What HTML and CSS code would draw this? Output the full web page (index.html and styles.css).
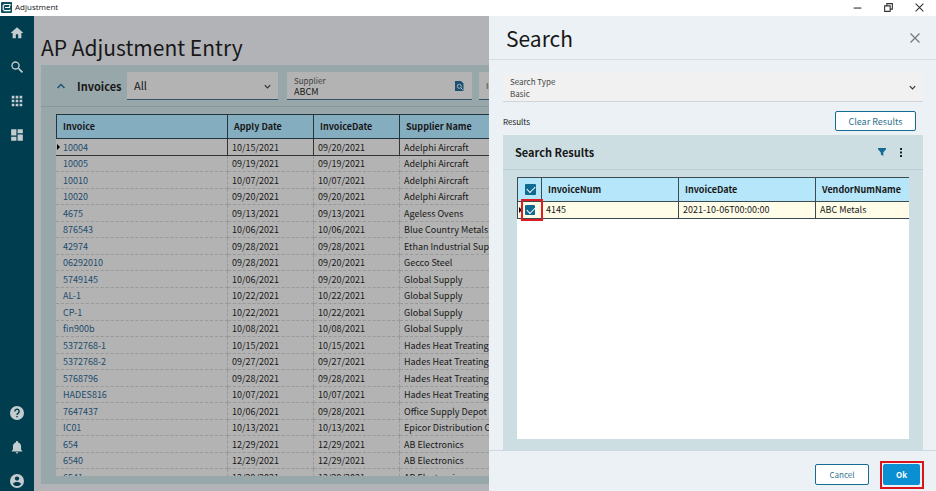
FILE: index.html
```html
<!DOCTYPE html>
<html lang="en">
<head>
<meta charset="utf-8">
<title>Adjustment</title>
<link rel="stylesheet" href="styles.css">
</head>
<body>
<header class="titlebar">
  <svg class="app-logo" viewBox="0 0 11 11"><rect width="11" height="11" rx="1" fill="#0a4f60"/><path d="M9 4V2.500H3.500L2.200 3.600v4L3.500 8.600H9V7.400M4 5.500h4.500V4" fill="none" stroke="#fff" stroke-width="1.100"/></svg>
  <span class="app-name">Adjustment</span>
  <div class="window-controls">
    <button type="button" aria-label="Minimize"><svg viewBox="0 0 10 10"><path d="M1.500 5.500h7"/></svg></button>
    <button type="button" aria-label="Restore"><svg viewBox="0 0 10 10"><path d="M1.500 3.500h5v5h-5zM3.500 3.500v-2h5v5h-2"/></svg></button>
    <button type="button" aria-label="Close"><svg viewBox="0 0 10 10"><path d="M1.500 1.500l7 7M8.500 1.500l-7 7"/></svg></button>
  </div>
</header>
<div class="workspace">
  <nav class="sidebar" aria-label="Main">
    <a href="#" aria-label="Home"><svg viewBox="0 0 24 24"><path d="M10 21v-7h4v7h5.500v-9H23L12 2 1 12h3.500v9z"/></svg></a>
    <a href="#" aria-label="Search"><svg viewBox="0 0 24 24"><path d="M16.300 14.300h-.9l-.3-.3a7.200 7.200 0 1 0-1 1l.3.300v.9l6 6 1.900-1.900zm-6.800 0a4.900 4.900 0 1 1 0-9.800 4.900 4.900 0 0 1 0 9.800z"/></svg></a>
    <a href="#" aria-label="Menu"><svg viewBox="0 0 24 24"><path d="M3 3h4.500v4.500H3zM9.750 3h4.500v4.500h-4.500zM16.500 3H21v4.500h-4.500zM3 9.750h4.500v4.500H3zM9.750 9.750h4.500v4.500h-4.500zM16.500 9.750H21v4.500h-4.500zM3 16.500h4.500V21H3zM9.750 16.500h4.500V21h-4.500zM16.500 16.500H21V21h-4.500z"/></svg></a>
    <a href="#" aria-label="Dashboard"><svg viewBox="0 0 24 24"><path d="M2 2h9v11H2zM2 15h9v7H2zM13 2h9v7h-9zM13 11h9v11h-9z"/></svg></a>
    <a href="#" class="push" aria-label="Help"><svg viewBox="0 0 24 24"><circle cx="12" cy="12" r="12"/><path class="cut" d="M8.300 9.300a3.700 3.700 0 1 1 5.800 3c-1.300.9-2 1.500-2 3M12 17v2.200"/></svg></a>
    <a href="#" aria-label="Notifications"><svg viewBox="0 0 24 24"><path d="M12 23a2.200 2.200 0 0 0 2.200-2.200H9.800A2.200 2.200 0 0 0 12 23zm7-6.500V11c0-3.300-1.800-6-5-6.800V3.500a2 2 0 0 0-4 0v.7C6.800 5 5 7.700 5 11v5.500l-2 2v1h18v-1z"/></svg></a>
    <a href="#" aria-label="Account"><svg viewBox="0 0 24 24"><circle cx="12" cy="12" r="12"/><circle class="hole" cx="12" cy="7.800" r="3.700"/><path class="hole" d="M4.800 17c1.500-2.300 4.600-3.400 7.200-3.400s5.700 1.100 7.200 3.400c-1.600 2.200-4.200 3.500-7.200 3.500S6.400 19.200 4.800 17z"/></svg></a>
  </nav>
  <main class="page">
    <h1>AP Adjustment Entry</h1>
    <section class="panel">
      <div class="panel-head">
        <button type="button" class="collapse" aria-label="Collapse"><svg viewBox="0 0 10 10"><path d="M1.500 7L5 3.500 8.500 7"/></svg></button>
        <h2>Invoices</h2>
        <div class="field view">
          <select aria-label="View"><option>All</option></select>
          <svg class="chevron" viewBox="0 0 10 10"><path d="M2 3.500l3 3 3-3"/></svg>
        </div>
        <div class="field supplier">
          <label for="supplier">Supplier</label>
          <input id="supplier" type="text" value="ABCM">
          <button type="button" class="lookup" aria-label="Find supplier"><svg viewBox="0 0 10 10"><path d="M1 0H7l2.500 2.500V10H1z" fill="#1a5274"/><circle cx="5.300" cy="5.300" r="2" fill="none" stroke="#b3b3b3" stroke-width="1"/><path d="M6.800 6.800L9 9" stroke="#b3b3b3"/></svg></button>
        </div>
        <div class="field next"><label for="next">Invoice</label><input id="next" type="text"></div>
      </div>
      <div class="grid">
        <table>
          <colgroup><col class="c1"><col class="c2"><col class="c3"><col class="c4"></colgroup>
          <thead><tr><th>Invoice</th><th>Apply Date</th><th>InvoiceDate</th><th>Supplier Name</th></tr></thead>
          <tbody>
            <tr class="current"><td><a href="#">10004</a></td><td>10/15/2021</td><td>09/20/2021</td><td>Adelphi Aircraft</td></tr>
            <tr><td><a href="#">10005</a></td><td>09/19/2021</td><td>09/19/2021</td><td>Adelphi Aircraft</td></tr>
            <tr><td><a href="#">10010</a></td><td>10/07/2021</td><td>10/07/2021</td><td>Adelphi Aircraft</td></tr>
            <tr><td><a href="#">10020</a></td><td>09/20/2021</td><td>09/20/2021</td><td>Adelphi Aircraft</td></tr>
            <tr><td><a href="#">4675</a></td><td>09/13/2021</td><td>09/13/2021</td><td>Ageless Ovens</td></tr>
            <tr><td><a href="#">876543</a></td><td>10/06/2021</td><td>10/06/2021</td><td>Blue Country Metals C</td></tr>
            <tr><td><a href="#">42974</a></td><td>09/28/2021</td><td>09/28/2021</td><td>Ethan Industrial Supp</td></tr>
            <tr><td><a href="#">06292010</a></td><td>09/28/2021</td><td>09/20/2021</td><td>Gecco Steel</td></tr>
            <tr><td><a href="#">5749145</a></td><td>10/06/2021</td><td>09/20/2021</td><td>Global Supply</td></tr>
            <tr><td><a href="#">AL-1</a></td><td>10/22/2021</td><td>10/22/2021</td><td>Global Supply</td></tr>
            <tr><td><a href="#">CP-1</a></td><td>10/22/2021</td><td>10/22/2021</td><td>Global Supply</td></tr>
            <tr><td><a href="#">fin900b</a></td><td>10/08/2021</td><td>10/08/2021</td><td>Global Supply</td></tr>
            <tr><td><a href="#">5372768-1</a></td><td>10/15/2021</td><td>10/15/2021</td><td>Hades Heat Treating</td></tr>
            <tr><td><a href="#">5372768-2</a></td><td>09/27/2021</td><td>09/27/2021</td><td>Hades Heat Treating</td></tr>
            <tr><td><a href="#">5768796</a></td><td>09/28/2021</td><td>09/28/2021</td><td>Hades Heat Treating</td></tr>
            <tr><td><a href="#">HADES816</a></td><td>10/07/2021</td><td>10/07/2021</td><td>Hades Heat Treating</td></tr>
            <tr><td><a href="#">7647437</a></td><td>10/06/2021</td><td>09/28/2021</td><td>Office Supply Depot</td></tr>
            <tr><td><a href="#">IC01</a></td><td>10/13/2021</td><td>10/13/2021</td><td>Epicor Distribution Co</td></tr>
            <tr><td><a href="#">654</a></td><td>12/29/2021</td><td>12/29/2021</td><td>AB Electronics</td></tr>
            <tr><td><a href="#">6540</a></td><td>12/29/2021</td><td>12/29/2021</td><td>AB Electronics</td></tr>
            <tr><td><a href="#">6541</a></td><td>12/29/2021</td><td>12/29/2021</td><td>AB Electronics</td></tr>
          </tbody>
        </table>
      </div>
    </section>
  </main>
  <aside class="drawer">
    <div class="drawer-head">
      <h1>Search</h1>
      <button type="button" aria-label="Close search"><svg viewBox="0 0 10 10"><path d="M.5.5l9 9M9.500.5l-9 9"/></svg></button>
    </div>
    <div class="drawer-body">
      <div class="search-type">
        <label for="type">Search Type</label>
        <select id="type"><option>Basic</option></select>
        <svg class="chevron" viewBox="0 0 10 10"><path d="M2 3.500l3 3 3-3"/></svg>
      </div>
      <div class="results-bar"><span>Results</span><button type="button" class="outline clear">Clear Results</button></div>
      <section class="results">
        <div class="results-head">
          <h2>Search Results</h2>
          <button type="button" aria-label="Filter"><svg viewBox="0 0 10 10"><path d="M1 1h8v1.200L6.300 5.500V9L3.800 7.500v-2L1 2.200z" fill="#146c93"/></svg></button>
          <button type="button" aria-label="More"><svg viewBox="0 0 10 10"><path d="M4 1h2v2H4zM4 4.500h2v2H4zM4 8h2v2H4z" fill="#222"/></svg></button>
        </div>
        <div class="results-grid">
          <table>
            <colgroup><col class="r1"><col class="r2"><col class="r3"><col class="r4"></colgroup>
            <thead><tr><th><input type="checkbox" checked aria-label="Select all"></th><th>InvoiceNum</th><th>InvoiceDate</th><th>VendorNumName</th></tr></thead>
            <tbody><tr class="current"><td><input type="checkbox" checked aria-label="Select 4145"></td><td>4145</td><td>2021-10-06T00:00:00</td><td>ABC Metals</td></tr></tbody>
          </table>
        </div>
      </section>
    </div>
    <footer class="actions">
      <button type="button" class="outline cancel">Cancel</button>
      <div class="marked"><button type="button" class="ok">Ok</button></div>
    </footer>
  </aside>
</div>
</body>
</html>
```
FILE: styles.css
```css
* { box-sizing: border-box; }
body {
  margin: 0;
  height: 100vh;
  display: flex;
  flex-direction: column;
  overflow: hidden;
  font-family: "Noto Sans CJK SC", "Noto Sans", sans-serif;
  font-size: 9px;
  color: #181818;
}
button, input, select { font: inherit; color: inherit; margin: 0; padding: 0; border: 0; background: none; }
h1, h2 { margin: 0; }
a { text-decoration: none; }
svg { display: block; }
table { width: 100%; table-layout: fixed; border-collapse: separate; border-spacing: 0; }
th, td { text-align: left; white-space: nowrap; overflow: hidden; padding: 0 4px; }
th { font-weight: 700; padding: 0 6px; }

.titlebar { flex: 0 0 16px; display: flex; align-items: center; padding: 0 11px 2px 1px; gap: 3px; background: #fff; font-family: "Open Sans", sans-serif; font-size: 8px; line-height: 14px; }
.app-logo { width: 11px; height: 11px; }
.window-controls { margin-left: auto; display: flex; gap: 20px; }
.window-controls svg { width: 11px; height: 11px; fill: none; stroke: #333; stroke-width: 1; }

.workspace { flex: 1; min-height: 0; display: flex; }
.sidebar { flex: 0 0 34px; display: flex; flex-direction: column; align-items: center; gap: 20px; padding: 10px 0 3px; background: #003d4e; }
.sidebar svg { width: 14px; height: 14px; fill: #c3cdd0; }
.sidebar .push { margin-top: auto; }
.sidebar .cut { fill: none; stroke: #003d4e; stroke-width: 2.400; }
.sidebar .hole { fill: #003d4e; }

.page { flex: 1; min-width: 0; overflow: hidden; display: flex; flex-direction: column; padding: 0 0 7px 7px; background: #b1b3b6; }
.page h1 { padding-top: 14px; height: 49px; font-size: 21px; font-weight: 400; line-height: 35px; white-space: nowrap; }
.panel { flex: 1; min-height: 0; display: flex; flex-direction: column; background: #98a7a9; }
.panel-head { flex: 0 0 42px; display: flex; align-items: center; border-bottom: 1px solid #849a9f; padding-left: 15px; overflow: hidden; }
.collapse svg { width: 10px; height: 10px; fill: none; stroke: #1a5274; stroke-width: 1.400; }
.panel-head h2 { width: 50px; margin: 0 0 0 11px; font-size: 11px; line-height: 16px; flex: none; }
.field { position: relative; flex: none; height: 28px; background: #b3b3b3; border-bottom: 1px solid #33556b; }
.field label { display: block; font-size: 8px; line-height: 10px; padding: 4px 0 0 7px; color: #3c3c3c; }
.field input { display: block; width: 70%; padding-left: 7px; font-size: 9px; line-height: 12px; height: 12px; }
.view { width: 151px; }
.view select { width: 100%; height: 27px; appearance: none; padding-left: 7px; font-size: 11px; }
.chevron { position: absolute; right: 6px; top: 10px; width: 9px; height: 9px; fill: none; stroke: #333; stroke-width: 1.300; pointer-events: none; }
.supplier { width: 185px; margin: 0 7px 0 9px; }
.lookup { position: absolute; right: 8px; top: 9px; }
.lookup svg { width: 10px; height: 10px; }
.next { width: 185px; }
.next label { padding-top: 8px; line-height: 12px; }

.grid { flex: 1; min-height: 0; overflow: hidden; margin: 7px 0 8px 15px; background: #b3b3b3; }
.c1 { width: 172px; } .c2 { width: 86px; } .c3 { width: 86px; } .c4 { width: auto; }
.grid th { height: 25px; background: #84adc0; border: solid #26343c; border-width: 1px 1px 1px 0; }
.grid th:first-child { border-left-width: 1px; }
.grid td { height: 16px; line-height: 15px; border: dashed #999; border-width: 0 1px 1px 0; }
.grid tr:nth-child(odd) td { height: 17px; }
.grid .current td { border-style: solid; border-color: #333; }
.grid td:first-child { padding-left: 7px; }
.grid th:last-child, .grid td:last-child, .grid .current td:last-child { border-right: 0; }
.grid a { color: #1d4c6c; }
.current td:first-child { position: relative; }
.current td:first-child::before { content: ""; position: absolute; left: 1px; top: 5px; border: solid transparent; border-width: 3px 0 3px 3px; border-left-color: #000; }

.drawer { flex: 0 0 447px; display: flex; flex-direction: column; background: #ebf1f4; }
.drawer-head { flex: 0 0 44px; display: flex; align-items: center; justify-content: space-between; padding: 0 16px 0 17px; border-bottom: 1px solid #d3dfe2; }
.drawer-head h1 { font-size: 21px; font-weight: 400; line-height: 28px; }
.drawer-head svg { width: 10px; height: 10px; fill: none; stroke: #777; stroke-width: 1.200; }
.drawer-body { flex: 1; min-height: 0; display: flex; flex-direction: column; padding: 13px 13px 0 14px; }
.search-type { position: relative; flex: 0 0 29px; background: #f1f1f1; border-bottom: 1px solid #d4d4d8; color: #444; font-size: 8px; }
.search-type label { display: block; padding: 4px 0 0 7px; line-height: 10px; }
.search-type select { display: block; appearance: none; width: 100%; height: 14px; padding-left: 7px; line-height: 14px; }
.results-bar { flex: 0 0 33px; display: flex; align-items: center; justify-content: space-between; padding: 5px 7px 0 0; font-size: 8px; }
.outline { border: 1px solid #146c93; border-radius: 2px; background: #fff; color: #31718f; }
.clear { width: 81px; height: 20px; font-size: 9px; }
.results { flex: 1; min-height: 0; display: flex; flex-direction: column; background: #cddee3; }
.results-head { flex: 0 0 35px; display: flex; align-items: center; gap: 9px; padding: 0 17px 0 12px; border-bottom: 1px solid #b9ced5; }
.results-head h2 { font-size: 11px; line-height: 16px; margin-right: auto; }
.results-head svg { width: 10px; height: 10px; }
.results-grid { flex: 1; min-height: 0; margin: 7px 14px 11px; background: #fff; }
.r1 { width: 25px; } .r2 { width: 137px; } .r3 { width: 137px; } .r4 { width: auto; }
.results-grid th { height: 25px; background: #b5e6fa; border: solid #3c4a50; border-width: 1px 1px 1px 0; }
.results-grid td { height: 17px; line-height: 16px; background: #fffde8; border: solid #3c4a50; border-width: 0 1px 1px 0; }
.results-grid th:first-child, .results-grid td:first-child { border-left-width: 1px; padding: 0 0 0 7px; overflow: visible; }
.results-grid th:last-child, .results-grid td:last-child { border-right: 0; }
.results-grid input { display: block; appearance: none; width: 11px; height: 11px; border-radius: 1px; background: #0f6a92; position: relative; }
.results-grid td input { width: 10px; height: 10px; }
.results-grid input::after { content: ""; position: absolute; left: 2px; top: 2px; width: 7px; height: 4px; border: solid #fff; border-width: 0 0 1px 1px; transform: rotate(-45deg); }
.results-grid td:first-child::after { content: ""; position: absolute; left: 3px; top: -3px; width: 18px; height: 18px; border: 2px solid #e01b22; }
.actions { flex: 0 0 41px; display: flex; align-items: center; justify-content: flex-end; gap: 11px; padding: 7px 12px 0 0; border-top: 1px solid #cad9de; }
.actions button { height: 21px; font-size: 8px; }
.cancel { width: 54px; }
.marked { border: 2px solid #d8141c; padding: 1px 2px 2px 1px; }
.ok { display: block; width: 37px; border-radius: 2px; background: #0a8fd2; color: #fff; font-weight: 700; }
```
